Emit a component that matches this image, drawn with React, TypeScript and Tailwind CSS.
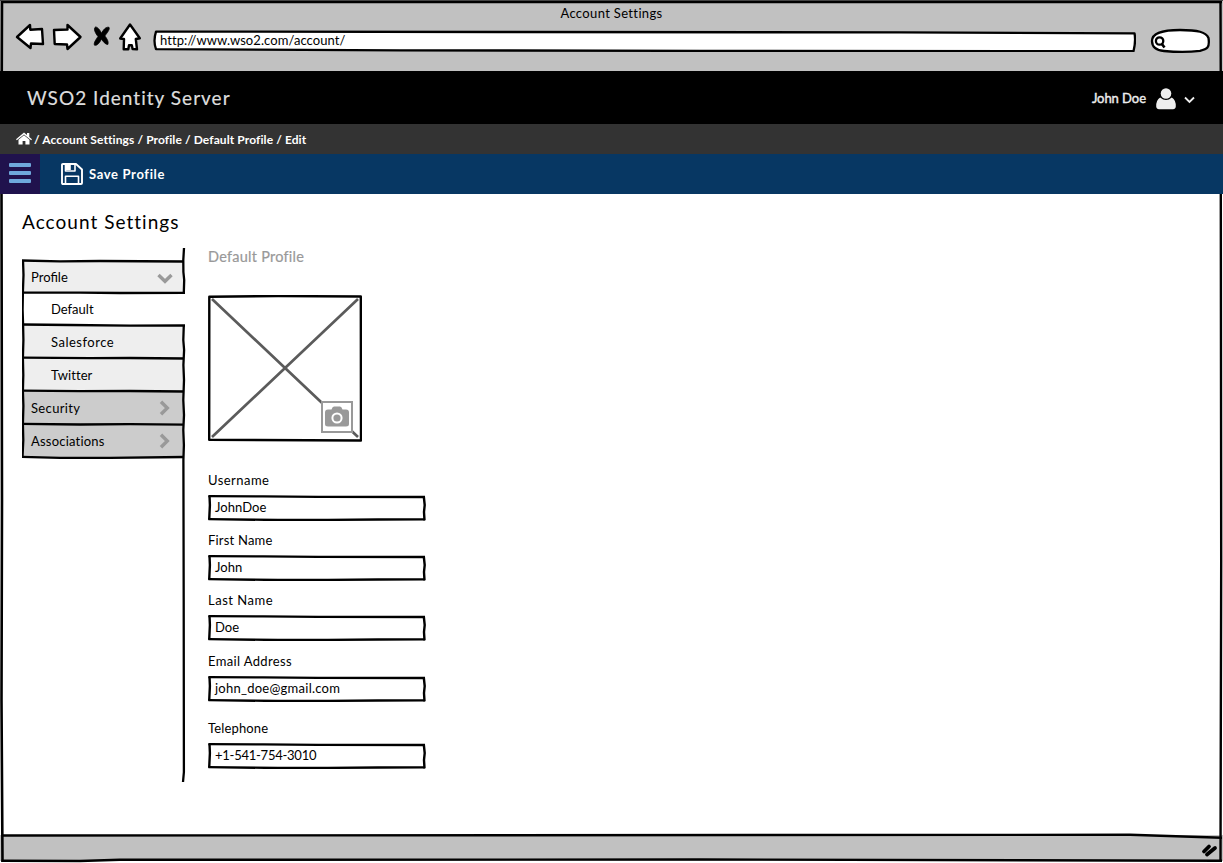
import type { ReactNode } from "react";

const crumbs = "/ Account Settings / Profile / Default Profile / Edit";

const navItems = [
  { label: "Profile", row: "h-[32px] pl-[9px] bg-[#eeeeee]", text: "tracking-[0px]", icon: "down" },
  { label: "Default", row: "h-[32px] pl-[29px] bg-white", text: "tracking-[0px]", icon: "" },
  { label: "Salesforce", row: "h-[33px] pl-[29px] bg-[#eeeeee]", text: "tracking-[0.5px]", icon: "" },
  { label: "Twitter", row: "h-[33px] pl-[29px] bg-[#eeeeee]", text: "tracking-[0.1px]", icon: "" },
  { label: "Security", row: "h-[33px] pl-[9px] bg-[#cccccc]", text: "tracking-[0.35px]", icon: "right" },
  { label: "Associations", row: "h-[33px] pl-[9px] bg-[#cccccc]", text: "tracking-[0.2px]", icon: "right" },
];

const fields = [
  { label: "Username", value: "JohnDoe", gap: "", lt: "tracking-[0.45px]", vt: "tracking-[0.05px]" },
  { label: "First Name", value: "John", gap: "mt-[10px]", lt: "tracking-[0.2px]", vt: "tracking-[0px]" },
  { label: "Last Name", value: "Doe", gap: "mt-[10px]", lt: "tracking-[0.5px]", vt: "tracking-[0px]" },
  { label: "Email Address", value: "john_doe@gmail.com", gap: "mt-[11px]", lt: "tracking-[0.35px]", vt: "tracking-[0.25px]" },
  { label: "Telephone", value: "+1-541-754-3010", gap: "mt-[17px]", lt: "tracking-[0.15px]", vt: "tracking-[-0.25px]" },
];

function Chevron({ dir }: { dir: string }) {
  return dir === "down" ? (
    <svg className="mr-[10px] mt-[3px]" width="16" height="11" viewBox="0 0 16 11" fill="none" stroke="#999" strokeWidth="3.4">
      <path d="M1.5 2 L8 8.3 L14.5 2" />
    </svg>
  ) : (
    <svg className="mr-[13px]" width="11" height="16" viewBox="0 0 11 16" fill="none" stroke="#999" strokeWidth="3.4">
      <path d="M2 1.7 L8.3 8 L2 14.3" />
    </svg>
  );
}

function BrowserIcons() {
  return (
    <svg className="shrink-0" width="128" height="32" viewBox="14 21 128 32" fill="#fff" stroke="#000" strokeWidth="2.4" strokeLinejoin="round">
      <path d="M17 37 L30 25 L30.3 29.7 L42 29 L43 44 L31 43.5 L30.5 48 Z" />
      <path d="M54 30 L67.5 29.5 L67.5 25 L80.5 37 L67.5 49 L67 44.5 L54.7 44 Z" />
      <path
        strokeWidth="0.8"
        fill="#000"
        d="M95.5 27 C98 27 100.500 31 101.500 33.200 C103 30.500 105.500 26.500 109 27.300 C110.300 29.500 106.500 33.500 104.800 36 C107 38.500 109 42 107.800 44.500 C105.500 44.600 103 41.500 101.500 39 C100 42 97.500 46 94.500 45.200 C93.300 43 96.500 38.800 98 36.500 C95.500 33.500 93 28.500 95.500 27 Z"
      />
      <path d="M130 24.500 L139.800 38.200 L135.800 39 L137 49.300 L132.600 49 L131.800 45.300 L129 45.300 L128.300 49.300 L123.700 49.300 L124 39 L120.200 38.500 Z" />
    </svg>
  );
}

function Field({ label, value, gap, lt, vt }: { label: string; value: string; gap: string; lt: string; vt: string }) {
  return (
    <label className={`block ${gap}`}>
      <span className={`block h-5 leading-5 ${lt}`}>{label}</span>
      <span className="relative mt-[5px] flex h-[25px] w-[218px] items-center pl-[7px]">
        <svg className="absolute inset-0" width="218" height="26" viewBox="0 0 218 26" fill="none" stroke="#000">
          <path strokeWidth="2.4" d="M1.500 0.800 L1.900 10 L1.200 24.800" />
          <path strokeWidth="2.3" d="M0.400 1.200 L55 1.400 L110 1.900 L217 2" />
          <path strokeWidth="2.3" d="M0.400 24.200 L70 25 L120 24.900 L170 24.500 L217 24.400" />
          <path strokeWidth="2.400" d="M215.800 1.500 L216.700 10 L216 17 L216.500 25.400" />
        </svg>
        <span className={`pb-[2px] leading-5 ${vt}`}>{value}</span>
      </span>
    </label>
  );
}

function Bar({ className, children }: { className: string; children?: ReactNode }) {
  return <div className={`flex shrink-0 items-center ${className}`}>{children}</div>;
}

export default function App() {
  return (
    <div className="relative flex h-[863px] w-[1223px] flex-col overflow-hidden bg-white font-['Lato','Liberation_Sans',sans-serif] text-[13px] text-black">
      <header className="flex h-[71px] shrink-0 flex-col bg-[#c1c1c1]">
        <div className="h-[27px] pt-[4px] text-center leading-[18px] tracking-[0.35px]">Account Settings</div>
        <div className="-mt-[6px] flex h-8 items-center pl-[14px]">
          <BrowserIcons />
          <div className="relative ml-[11px] mt-[8px] flex h-[22px] w-[983px] items-center pl-[7px]">
            <svg className="absolute inset-0" width="983" height="22" viewBox="153 30 983 22" fill="#fff" stroke="#000" strokeWidth="2.300" strokeLinejoin="round">
              <path d="M156 31.600 L500 32 L900 32.400 L1134.500 33.300 Q1136 41 1133.500 51.200 L700 50.900 L400 50.300 L156 49.200 Q153 41 156 31.600 Z" />
            </svg>
            <span className="relative pb-[2px] leading-5 tracking-[0.08px]">http://www.wso2.com/account/</span>
          </div>
          <svg className="ml-[13px] mt-[8px]" width="62" height="26" viewBox="1149 28 62 26" fill="none" stroke="#000" strokeWidth="2.300">
            <path fill="#fff" d="M1152 41 C1152 32 1165 30 1180 30 C1198 30 1206 32 1208.500 38 C1210 48 1207 49 1200 50.800 Q1184 53 1164 51 Q1152 50 1152 41 Z" />
            <circle cx="1159.600" cy="41" r="3.700" />
            <path d="M1161.500 43.500 L1164.500 47.500" strokeWidth="2.600" />
          </svg>
        </div>
      </header>

      <Bar className="h-[53px] bg-black pl-[27px] pr-[28px]">
        <span className="pt-[2px] text-[19px] tracking-[1.02px] text-[#dddddd] [-webkit-text-stroke:0.2px]">WSO2 Identity Server</span>
        <span className="ml-auto pt-[2px] tracking-[-0.05px] text-[#eeeeee] [-webkit-text-stroke:0.4px]">John Doe</span>
        <svg className="ml-[9px] mt-[2px]" width="22" height="22" viewBox="0 0 22 22" fill="#eee">
          <circle cx="11" cy="5.500" r="5.300" />
          <path d="M5.200 9.500 Q11 14.500 16.800 9.500 Q21 12 20.800 18.500 Q20.500 21.300 18 21.300 L4 21.300 Q1.500 21.300 1.200 18.500 Q1 12 5.200 9.500 Z" />
        </svg>
        <svg className="ml-[7px] mt-[4px]" width="11" height="8" viewBox="0 0 11 8" fill="none" stroke="#eee" strokeWidth="1.800">
          <path d="M1 1.500 L5.500 6 L10 1.500" />
        </svg>
      </Bar>

      <Bar className="relative z-10 h-[30px] bg-[#333333] pl-[16px] text-white">
        <svg className="mb-[2px]" width="16" height="13" viewBox="0 0 16 13" fill="#fff">
          <path d="M8 0.500 L11 3 L11 1 L13.300 1 L13.300 5 L16 7.300 L15.200 8.200 L8 2.400 L0.800 8.200 L0 7.300 Z" />
          <path d="M8 3.300 L13.500 7.800 L13.500 12.600 L9.400 12.600 L9.400 9 L6.600 9 L6.600 12.600 L2.500 12.600 L2.500 7.800 Z" />
        </svg>
        <span className="ml-[2px] pt-[2px] text-[12px] font-bold tracking-[0.1px]">{crumbs}</span>
      </Bar>

      <Bar className="relative z-10 h-10 bg-[#073763] text-white">
        <button className="flex h-10 w-10 flex-col items-center justify-center gap-[4px] bg-[#20124d] pb-[2px]" aria-label="Menu">
          <span className="h-[4px] w-[22px] rounded-[1px] bg-[#6fa8dc]" />
          <span className="h-[4px] w-[22px] rounded-[1px] bg-[#6fa8dc]" />
          <span className="h-[4px] w-[22px] rounded-[1px] bg-[#6fa8dc]" />
        </button>
        <svg className="ml-[21px]" width="22" height="22" viewBox="0 0 22 22" fill="none" stroke="#fff" strokeWidth="1.900" strokeLinejoin="round">
          <path d="M2 1 L15 1 L21 6.500 L21 20 Q21 21 20 21 L2 21 Q1 21 1 20 L1 2 Q1 1 2 1 Z" />
          <path d="M4.500 21 L4.500 13.200 L17.500 13.200 L17.500 21 M4.500 1 L4.500 8 L14 8 L14 1" strokeWidth="1.600" />
          <path fill="#fff" stroke="none" d="M4.500 1 H9.800 V7 H4.500 Z" />
        </svg>
        <span className="ml-[6px] pt-[2px] text-[13px] font-bold tracking-[0.65px]">Save Profile</span>
      </Bar>

      <main className="flex flex-1 flex-col pl-[22px]">
        <h1 className="h-[54px] pt-[14px] text-[19px] leading-7 tracking-[1.03px]">Account Settings</h1>
        <div className="flex">
          <aside className="relative h-[536px] w-[163px] pt-[13px]">
            <nav className="w-[161px]">
              {navItems.map((n) => (
                <div key={n.label} className={`flex items-center justify-between ${n.row}`}>
                  <span className={`pt-[2px] ${n.text}`}>{n.label}</span>
                  {n.icon && <Chevron dir={n.icon} />}
                </div>
              ))}
            </nav>
            <svg className="absolute inset-0" width="164" height="536" viewBox="22 248 164 536" fill="none" stroke="#000" strokeWidth="2.300">
              <path d="M21.500 260.500 L60 261.300 L100 261 L184 261.500" />
              <path d="M22 292.700 L80 292.600 L120 293 L185 292.800" />
              <path d="M22 324.500 L70 325 L130 325.700 L185 325.500" />
              <path d="M22 357.600 L90 358.200 L130 358 L184 358.500" />
              <path d="M22 390.600 L80 391.200 L130 391 L184 391.500" />
              <path d="M22 423.800 L80 424.500 L130 424.200 L184 424.700" />
              <path d="M22 456.800 L60 457.900 L110 457.800 L184 457" />
              <path d="M23 260 L23.500 275 L22.900 292 L22.600 310 L23.100 325 L23.400 340 L22.900 358 L23.300 375 L22.900 391 L23.400 406 L22.900 424 L23.300 440 L22.500 457.500" />
              <path d="M184 248 L183.300 260 L183.400 272 L184.200 280 L183.800 293" />
              <path d="M183.800 325 L183.300 340 L184.100 350 L183.400 365 L184 380 L183.300 400 L184 415 L183.300 430 L183.900 445 L183.400 460 L183.700 600 L183.900 772 L183 782" />
            </svg>
          </aside>

          <section className="ml-[23px] flex flex-col">
            <h2 className="h-[47px] pt-px text-[14.500px] leading-4 tracking-[0.25px] text-[#999999] [-webkit-text-stroke:0.2px]">Default Profile</h2>
            <div className="relative h-[146px] w-[154px]">
              <svg className="absolute inset-0" width="154" height="147" viewBox="0 0 154 147" fill="none" stroke="#5b5b5b" strokeWidth="2.700">
                <path d="M4 4 L150 142 M150 4 L4 142" />
                <path stroke="#000" strokeWidth="2.400" strokeLinejoin="round" d="M1.300 1.700 L70 1 L152.800 1.500 L153 145.500 L1.200 144.800 Z" />
              </svg>
              <button className="absolute left-[113px] top-[106px] flex h-8 w-8 items-center justify-center border-2 border-[#999999] bg-white pb-px" aria-label="Change photo">
                <svg width="24" height="21" viewBox="0 0 24 21" fill="#999">
                  <path d="M3 3.500 L6.500 3.500 Q7.500 0.500 9 0.500 L15 0.500 Q16.500 0.500 17.500 3.500 L21 3.500 Q24 3.500 24 6.500 L24 18 Q24 20.500 21 20.500 L3 20.500 Q0 20.500 0 18 L0 6.500 Q0 3.500 3 3.500 Z" />
                  <circle cx="12" cy="12" r="4.600" stroke="#fff" strokeWidth="2" />
                </svg>
              </button>
            </div>
            <form className="mt-[29px]">
              {fields.map((f) => (
                <Field key={f.label} {...f} />
              ))}
            </form>
          </section>
        </div>
      </main>

      <footer className="mb-[2px] flex h-[26px] shrink-0 items-center justify-end bg-[#c1c1c1] pr-[5px]">
        <svg className="mt-[3px]" width="18" height="16" viewBox="0 0 18 16" fill="none" stroke="#000" strokeWidth="3.800" strokeLinecap="round">
          <path d="M4 9.500 L9 4.500 M7 12.500 L15 6" />
        </svg>
      </footer>

      <svg className="pointer-events-none absolute inset-0" width="1223" height="863" viewBox="0 0 1223 863" fill="none" stroke="#000" strokeWidth="2.400">
        <path d="M0 0 H1223" stroke="#444" strokeWidth="2" />
        <path d="M1 2.200 H1222" strokeWidth="2.200" />
        <path d="M2 1 L1.500 154 M1.500 194 L2 500 L1.500 700 L2.500 862" strokeWidth="2.600" />
        <path d="M1220.500 1 L1221 154 M1220.800 194 L1221.200 560 L1220.500 861" />
        <path d="M2 835.500 L1130 834.800 L1222 837.800" />
        <path d="M1.500 860.700 L80 861 L120 859.800 L700 859.500 L1222 860.800" />
      </svg>
    </div>
  );
}
